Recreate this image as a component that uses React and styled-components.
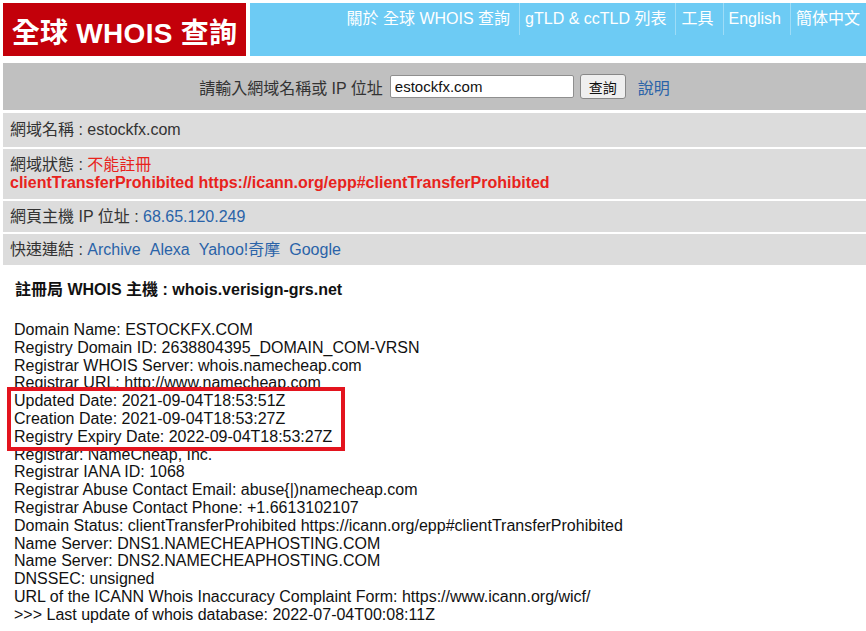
import React from "react";
import styled, { createGlobalStyle } from "styled-components";

const GlobalStyle = createGlobalStyle`
  body {
    margin: 0;
    background: #ffffff;
    font-family: "Liberation Sans", Arial, "Noto Sans CJK TC", sans-serif;
    color: #222;
  }
`;

const Page = styled.div`
  padding: 3px 0 0 3px;
`;

const Header = styled.div`
  display: flex;
  gap: 4px;
  height: 53px;
`;

const Logo = styled.div`
  width: 243px;
  flex: none;
  background: #c3000a;
  color: #fff;
  font-size: 28px;
  font-weight: bold;
  display: flex;
  align-items: center;
  justify-content: center;
  padding-top: 2px;
  box-sizing: border-box;
  letter-spacing: 0.3px;
`;

const Nav = styled.div`
  flex: 1;
  background: #6dcbf4;
  display: flex;
  justify-content: flex-end;
  align-items: flex-start;
`;

const NavItem = styled.a`
  color: #fff;
  font-size: 16px;
  line-height: 18px;
  text-decoration: none;
  padding: 7px 9px 7px 5px;
  & + & {
    border-left: 1px solid #9ddcf7;
  }
  &:last-child {
    padding-right: 6px;
  }
`;

const SearchBar = styled.form`
  margin-top: 7px;
  height: 47px;
  background: #c0c0c0;
  display: flex;
  align-items: center;
  justify-content: center;
  font-size: 16px;
  color: #333;
`;

const SearchInput = styled.input`
  width: 184px;
  height: 23px;
  box-sizing: border-box;
  margin-left: 7px;
  border: 1px solid #8f8f8f;
  border-radius: 2px;
  padding: 0 4px;
  font: 15px "Liberation Sans", Arial, sans-serif;
  color: #111;
`;

const SearchButton = styled.button`
  margin-left: 6px;
  width: 46px;
  height: 25px;
  border: 1px solid #888;
  border-radius: 3px;
  background: #efefef;
  font: 14px "Liberation Sans", Arial, "Noto Sans CJK TC", sans-serif;
  color: #111;
  padding: 0;
`;

const HelpLink = styled.a`
  margin-left: 12px;
  color: #2a63a8;
  text-decoration: none;
`;

const InfoList = styled.div`
  margin-top: 3px;
  display: flex;
  flex-direction: column;
  gap: 2px;
`;

const InfoRow = styled.div`
  background: #dcdcdc;
  padding: ${(p) => p.$pad || "7px"} 7px;
  font-size: 16px;
  line-height: 18px;
  color: #333;
`;

const Link = styled.a`
  color: #2a63a8;
  text-decoration: none;
  margin-right: ${(p) => (p.$gap ? "9px" : "0")};
`;

const Warn = styled.span`
  color: #e8231c;
`;

const WarnBold = styled.div`
  color: #e8231c;
  font-weight: bold;
`;

const RawSection = styled.div`
  padding: 16px 0 0 11px;
  font-size: 16px;
  color: #111;
`;

const ServerTitle = styled.div`
  font-weight: bold;
  padding-left: 1px;
  line-height: 18px;
`;

const RawText = styled.div`
  margin-top: 22px;
  line-height: 17.8px;
  white-space: pre;
`;

const Highlight = styled.div`
  width: 326px;
  margin-left: -2px;
  padding-left: 2px;
  outline: 4px solid #e3141e;
  outline-offset: 1px;
`;

const navItems = ["關於 全球 WHOIS 查詢", "gTLD & ccTLD 列表", "工具", "English", "簡体中文"];

const before = [
  "Domain Name: ESTOCKFX.COM",
  "Registry Domain ID: 2638804395_DOMAIN_COM-VRSN",
  "Registrar WHOIS Server: whois.namecheap.com",
  "Registrar URL: http://www.namecheap.com",
];

const dates = [
  "Updated Date: 2021-09-04T18:53:51Z",
  "Creation Date: 2021-09-04T18:53:27Z",
  "Registry Expiry Date: 2022-09-04T18:53:27Z",
];

const after = [
  "Registrar: NameCheap, Inc.",
  "Registrar IANA ID: 1068",
  "Registrar Abuse Contact Email: abuse{|)namecheap.com",
  "Registrar Abuse Contact Phone: +1.6613102107",
  "Domain Status: clientTransferProhibited https://icann.org/epp#clientTransferProhibited",
  "Name Server: DNS1.NAMECHEAPHOSTING.COM",
  "Name Server: DNS2.NAMECHEAPHOSTING.COM",
  "DNSSEC: unsigned",
  "URL of the ICANN Whois Inaccuracy Complaint Form: https://www.icann.org/wicf/",
  ">>> Last update of whois database: 2022-07-04T00:08:11Z",
];

export default function App() {
  return (
    <Page>
      <GlobalStyle />
      <Header>
        <Logo>全球 WHOIS 查詢</Logo>
        <Nav>
          {navItems.map((item) => (
            <NavItem key={item} href="#">
              {item}
            </NavItem>
          ))}
        </Nav>
      </Header>

      <SearchBar onSubmit={(e) => e.preventDefault()}>
        請輸入網域名稱或 IP 位址
        <SearchInput defaultValue="estockfx.com" />
        <SearchButton type="submit">查詢</SearchButton>
        <HelpLink href="#">說明</HelpLink>
      </SearchBar>

      <InfoList>
        <InfoRow $pad="8px">網域名稱 : estockfx.com</InfoRow>
        <InfoRow>
          網域狀態 : <Warn>不能註冊</Warn>
          <WarnBold>clientTransferProhibited https://icann.org/epp#clientTransferProhibited</WarnBold>
        </InfoRow>
        <InfoRow $pad="6.5px">
          網頁主機 IP 位址 : <Link href="#">68.65.120.249</Link>
        </InfoRow>
        <InfoRow $pad="6.5px">
          快速連結 : <Link $gap href="#">Archive</Link>
          <Link $gap href="#">Alexa</Link>
          <Link $gap href="#">Yahoo!奇摩</Link>
          <Link href="#">Google</Link>
        </InfoRow>
      </InfoList>

      <RawSection>
        <ServerTitle>註冊局 WHOIS 主機 : whois.verisign-grs.net</ServerTitle>
        <RawText>
          {before.join("\n")}
          <Highlight>{dates.join("\n")}</Highlight>
          {after.join("\n")}
        </RawText>
      </RawSection>
    </Page>
  );
}
